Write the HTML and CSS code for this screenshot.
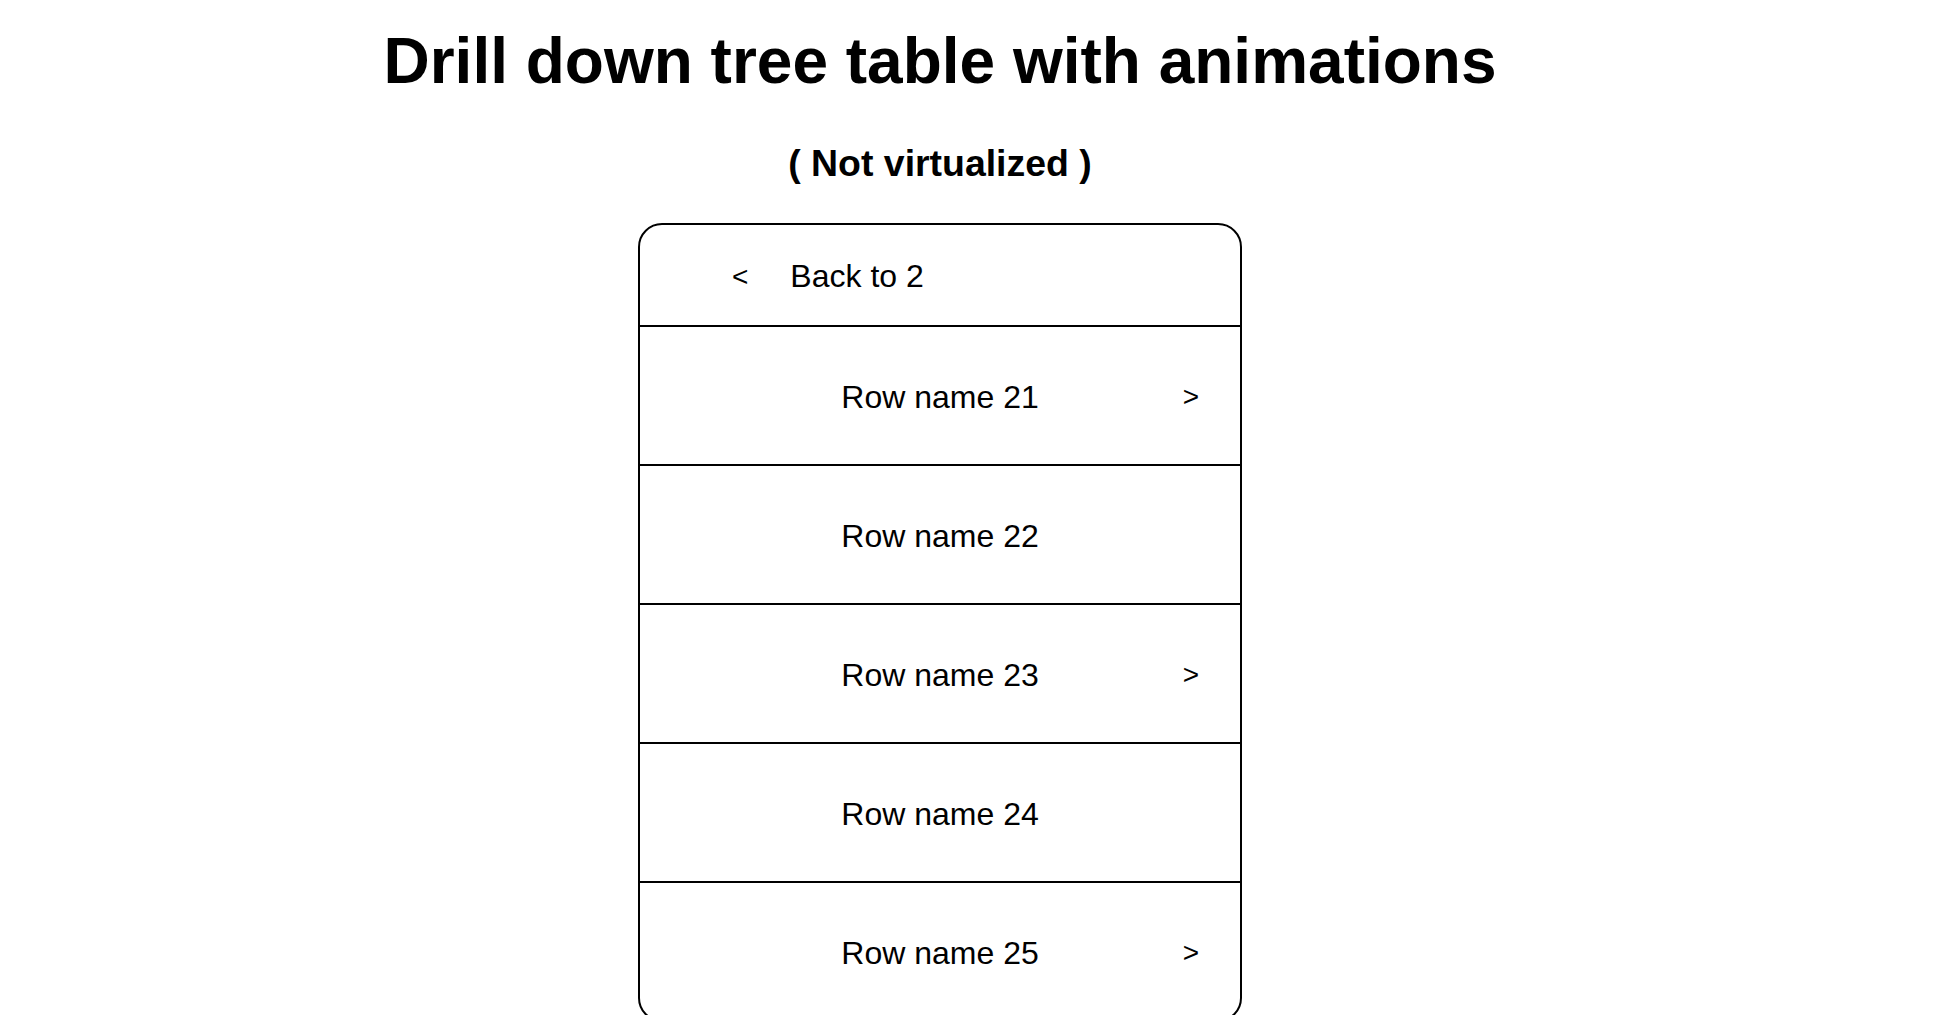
FILE: index.html
```html
<!DOCTYPE html>
<html lang="en">
<head>
    <meta charset="UTF-8">
    <meta name="viewport" content="width=device-width, initial-scale=1.0">
    <title>Drill down tree table with animations</title>
    <link rel="stylesheet" href="styles.css">
</head>
<body>
    <div class="page">
        <h1>Drill down tree table with animations</h1>
        <h3>( Not virtualized )</h3>

        <div class="tree-table">
            <div class="back-row">
                <span class="back-arrow">&lt;</span>
                <span class="back-label">Back to 2</span>
            </div>
            <div class="row">
                <span class="row-name">Row name 21</span>
                <span class="row-arrow">&gt;</span>
            </div>
            <div class="row">
                <span class="row-name">Row name 22</span>
                <span class="row-arrow"></span>
            </div>
            <div class="row">
                <span class="row-name">Row name 23</span>
                <span class="row-arrow">&gt;</span>
            </div>
            <div class="row">
                <span class="row-name">Row name 24</span>
                <span class="row-arrow"></span>
            </div>
            <div class="row">
                <span class="row-name">Row name 25</span>
                <span class="row-arrow">&gt;</span>
            </div>
        </div>
    </div>
</body>
</html>
```

FILE: styles.css
```css
body {
    margin: 0;
    font-family: "Liberation Sans", Arial, Helvetica, sans-serif;
    color: #000;
    background-color: #fff;
}
.page {
    width: 1880px;
    text-align: center;
}
h1 {
    font-size: 64px;
    margin: 24px 0 0;
}
h3 {
    font-size: 37.44px;
    margin: 44px 0 38px;
}

.tree-table {
    width: 600px;
    margin: 0 auto;
    border: 2px solid #000;
    border-radius: 24px;
    overflow: hidden;
    text-align: left;
    font-size: 32px;
}
.back-row {
    display: flex;
    align-items: center;
    gap: 42px;
    height: 97px;
    padding: 3px 0 0 92px;
    border-bottom: 2px solid #000;
}
.back-arrow, .row-arrow {
    font-size: 28px;
}
.row {
    display: grid;
    grid-template-columns: 1fr auto 1fr;
    align-items: center;
    height: 134px;
    padding-top: 3px;
    border-bottom: 2px solid #000;
}
.row:last-child {
    border-bottom: none;
}
.row-name {
    grid-column: 2;
}
.row-arrow {
    grid-column: 3;
    justify-self: end;
    padding-right: 41px;
}
```
